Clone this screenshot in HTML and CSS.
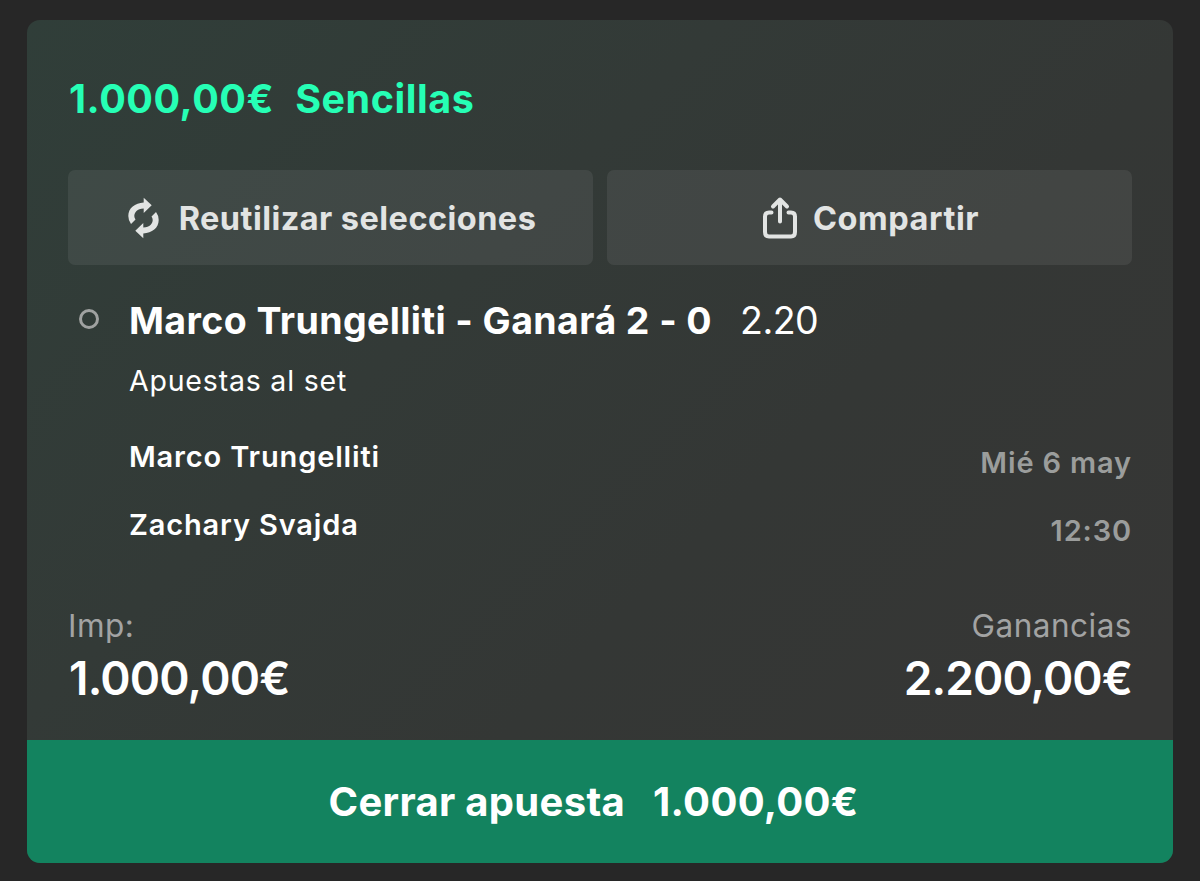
FILE: index.html
```html
<!DOCTYPE html>
<html lang="es">
<head>
<meta charset="utf-8">
<title>Apuesta</title>
<link rel="stylesheet" href="styles.css">
</head>
<body>
<article class="card">
  <div class="content">
    <header class="heading"><span class="stake">1.000,00€</span><span class="type">Sencillas</span></header>
    <div class="actions">
      <button class="action reuse">
        <svg class="icon-reuse" width="36" height="44" viewBox="0 0 36 44" fill="#e2e4e3">
          <path id="arc" d="M5 28Q2.300 24.500 2.300 20C2.300 12 9 7 17.700 6.500V1.700L25.700 9.300 17.700 17V12.500C11 12.800 8.300 16.500 8.300 20Q8.300 21.800 9.500 23.500Z"/>
          <use href="#arc" transform="rotate(180 17.500 22)"/>
        </svg>
        <span class="reuse-text">Reutilizar selecciones</span>
      </button>
      <button class="action share">
        <svg class="icon-share" width="36" height="44" viewBox="0 0 36 44" fill="none" stroke="#e2e4e3" stroke-width="4" stroke-linecap="round" stroke-linejoin="round">
          <path d="M9.500 16.500H7q-4 0-4 4v15.500q0 4.500 4 4.500h22q4 0 4-4.500v-15.500q0-4-4-4h-2.500M18 25.500V3.500M11 10.500l7-7 7 7"/>
        </svg>
        <span class="share-text">Compartir</span>
      </button>
    </div>
    <section class="selection">
      <span class="marker"></span>
      <div class="pick"><span class="pick-name">Marco Trungelliti - Ganará 2 - 0</span><span class="odds">2.20</span></div>
      <div class="market"><span>Apuestas al set</span></div>
      <div class="match">
        <div class="players"><span class="p1">Marco Trungelliti</span><span class="p2">Zachary Svajda</span></div>
        <div class="when"><span class="day">Mié 6 may</span><span class="hour">12:30</span></div>
      </div>
    </section>
    <div class="totals">
      <div class="total"><span class="label l1">Imp:</span><span class="amount a1">1.000,00€</span></div>
      <div class="total right"><span class="label l2">Ganancias</span><span class="amount a2">2.200,00€</span></div>
    </div>
  </div>
  <button class="cashout"><span class="c1">Cerrar apuesta</span><span class="c2">1.000,00€</span></button>
</article>
</body>
</html>
```
FILE: styles.css
```css
* { box-sizing: border-box; }
body { margin: 0; padding: 20px 27px 18px; height: 881px; background: #272727; font-family: Inter, "Liberation Sans", sans-serif; color: #fff; white-space: nowrap; overflow: hidden; }
button { font: inherit; color: inherit; border: 0; padding: 0; }
.card { height: 843px; border-radius: 13px; overflow: hidden; background: linear-gradient(135deg, #303e39 0%, #333a37 35%, #343735 60%, #363635 90%); }
.content { height: 720px; padding: 0 41px; }
.heading { height: 150px; padding: 54px 0 0 1px; display: flex; gap: 21px; font-size: 39.500px; line-height: 50px; font-weight: 700; color: #26ffb5; letter-spacing: .55px; }
.actions { display: grid; grid-template-columns: 525px 525px; gap: 14px; height: 95px; }
.action { display: flex; align-items: center; justify-content: center; border-radius: 7px; background: rgba(255, 255, 255, .07); color: #e2e4e3; font-size: 32.500px; font-weight: 700; letter-spacing: .45px; }
.action span { padding-top: 2px; }
.reuse { gap: 17px; padding-left: 1px; }
.share { gap: 15px; padding-left: 2px; }
.share-text { letter-spacing: .55px; }
.selection { display: grid; grid-template-columns: 61px 1fr; padding-top: 31px; }
.marker { width: 20px; height: 20px; border: 3px solid #a0a2a1; border-radius: 50%; margin: 13px 0 0 11px; }
.pick { display: flex; gap: 28px; height: 50px; line-height: 50px; font-size: 37.500px; }
.pick-name { font-weight: 700; letter-spacing: .4px; }
.odds { letter-spacing: -.5px; }
.market { grid-column: 2; margin-top: 14px; height: 42px; line-height: 42px; font-size: 28.500px; letter-spacing: .8px; }
.match { grid-column: 2; display: flex; justify-content: space-between; font-size: 29px; font-weight: 600; line-height: 68px; margin-top: 21px; letter-spacing: .85px; }
.players, .when { display: flex; flex-direction: column; }
.when { padding-top: 6px; align-items: flex-end; color: #9b9d9c; }
.totals { display: flex; justify-content: space-between; margin-top: 38px; }
.total { display: flex; flex-direction: column; align-items: flex-start; }
.right { align-items: flex-end; }
.label { font-size: 31.500px; line-height: 46px; color: #a2a3a3; letter-spacing: .5px; }
.amount { font-size: 46px; line-height: 58px; font-weight: 600; letter-spacing: -.8px; }
.a1 { padding-left: 1px; }
.a2 { letter-spacing: -.95px; }
.cashout { width: 100%; height: 123px; display: flex; align-items: center; justify-content: center; gap: 28px; padding: 0 13px 0 0; background: #13835f; font-size: 40px; font-weight: 700; letter-spacing: .3px; }
```
